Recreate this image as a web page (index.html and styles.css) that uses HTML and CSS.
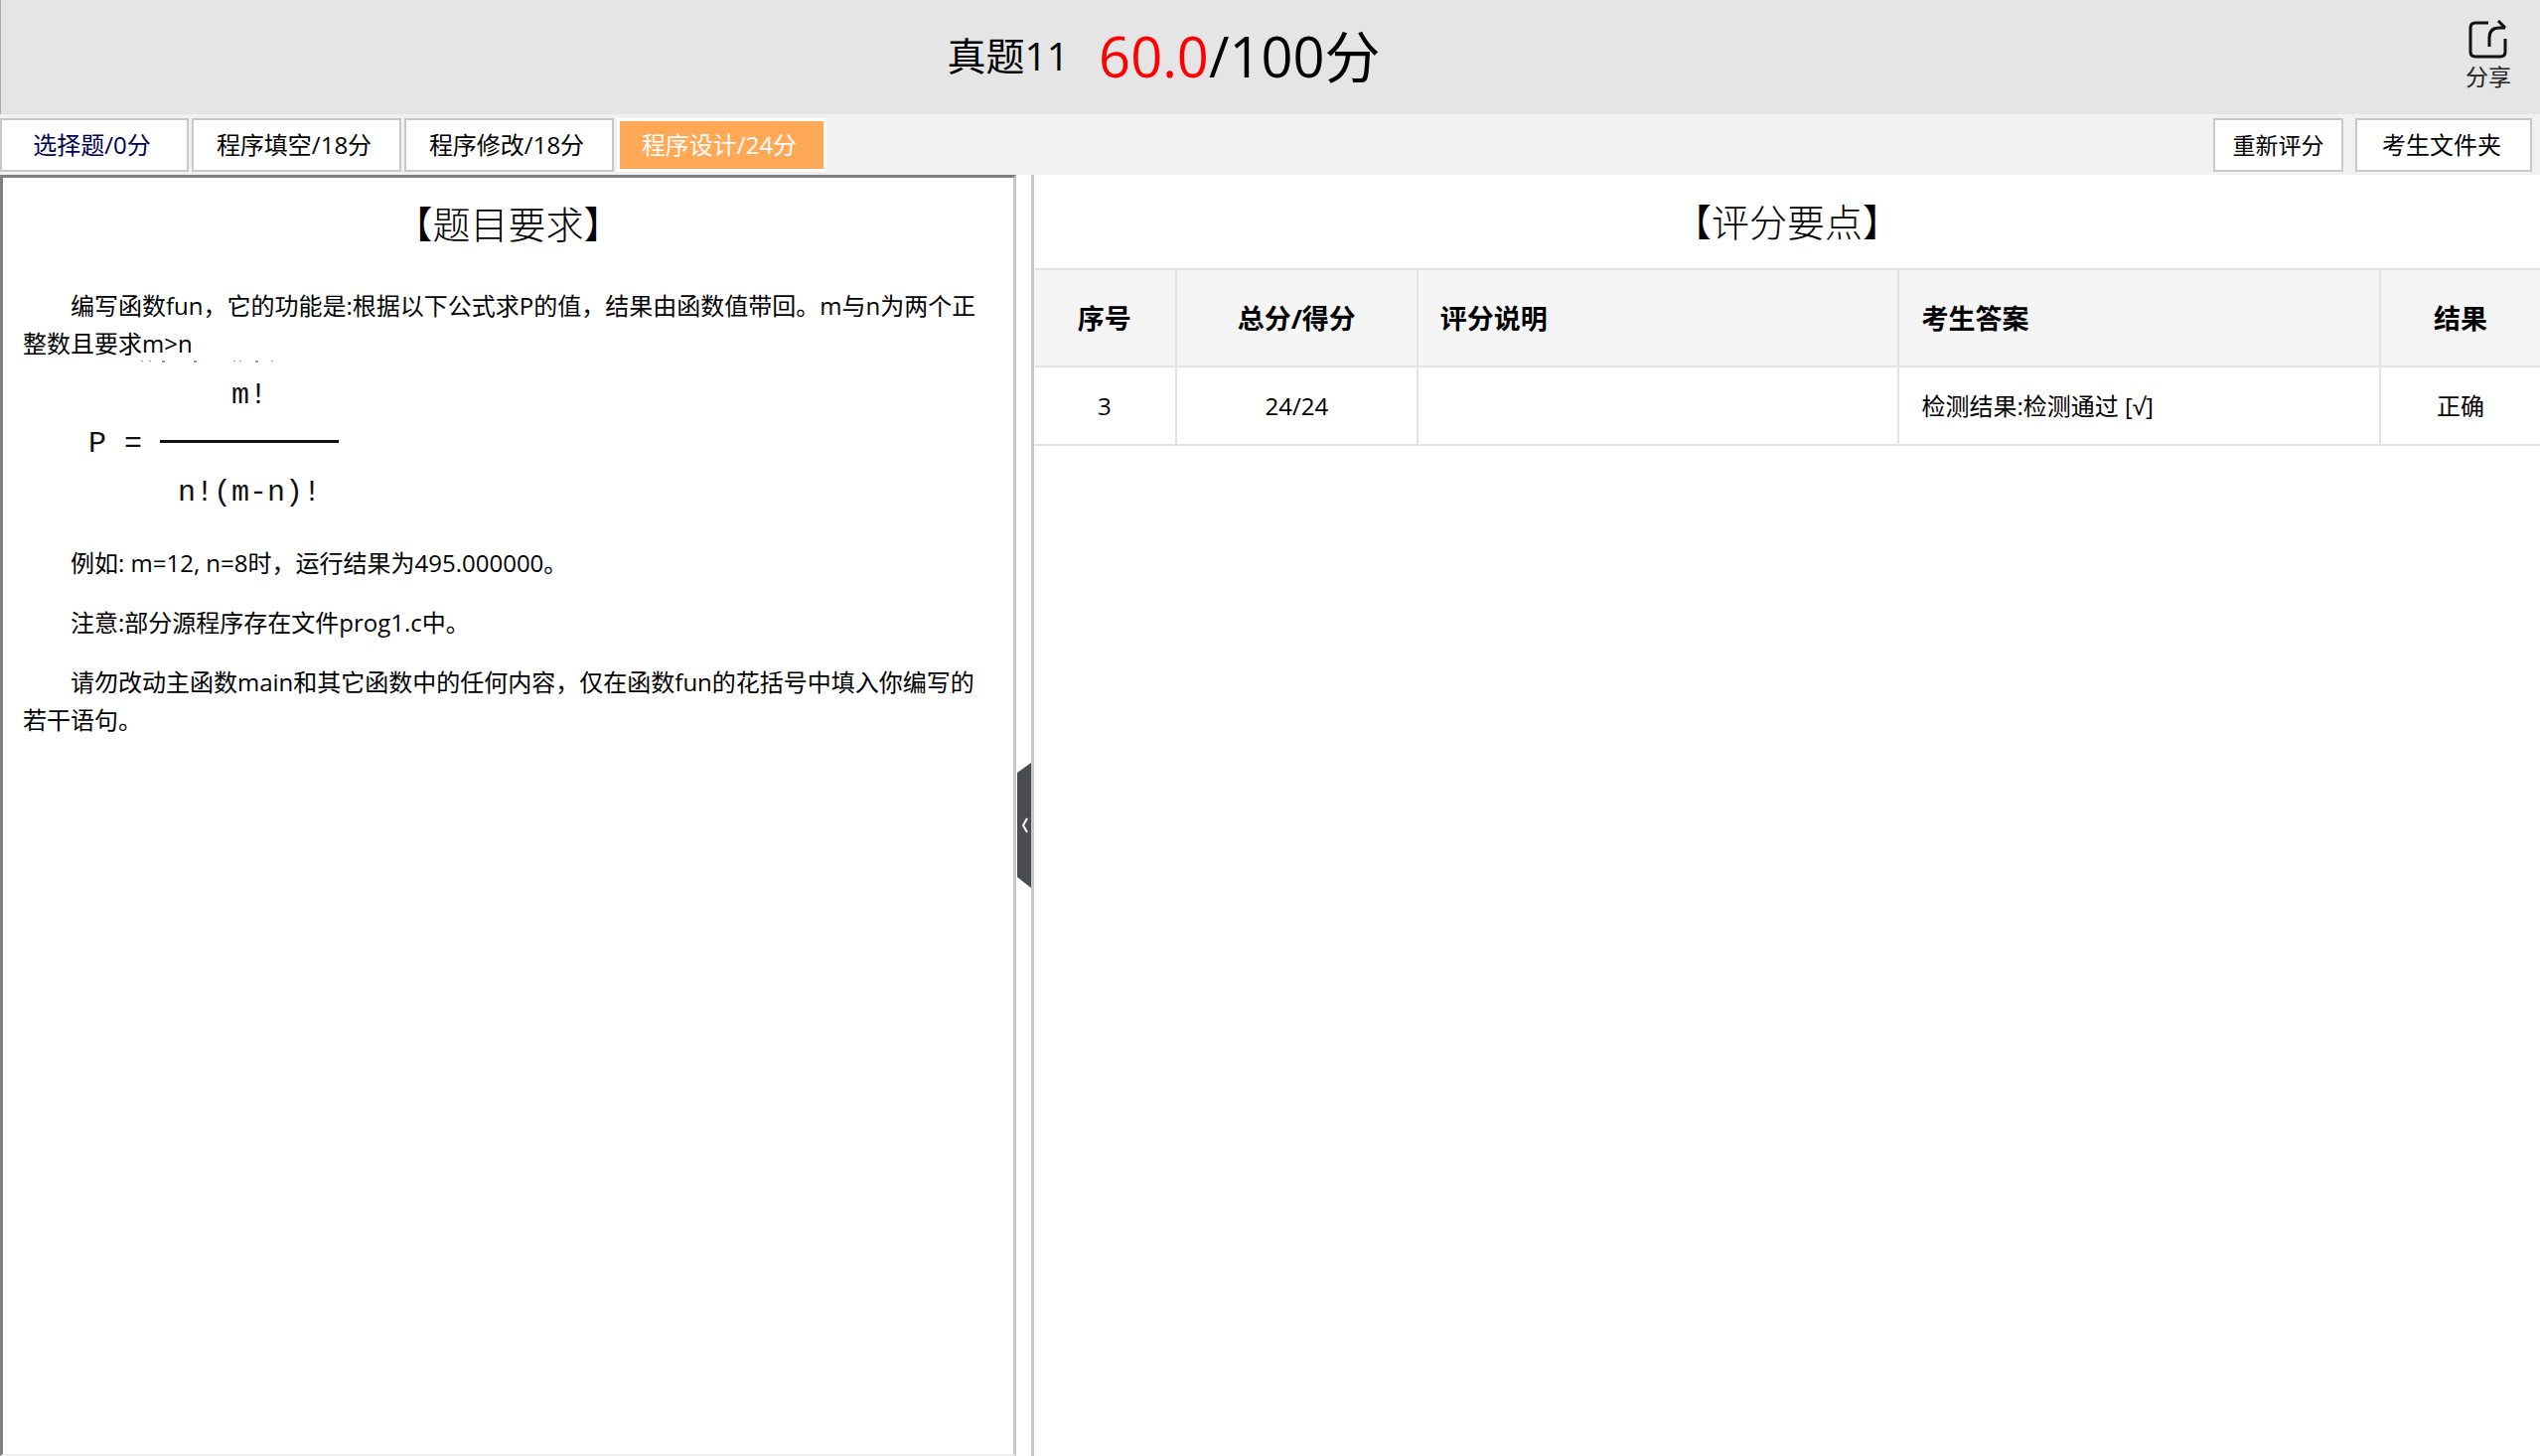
FILE: index.html
```html
<!DOCTYPE html>
<html lang="zh-CN">
<head>
<meta charset="utf-8">
<title>真题11</title>
<link rel="stylesheet" href="styles.css">
</head>
<body>
<div class="app">
  <header class="header">
    <div class="summary">
      <h1 class="paper">真题11</h1>
      <p class="score"><span class="score-got">60.0</span>/100分</p>
    </div>
    <div class="header-side">
      <button class="share" type="button">
        <svg class="share-icon" viewBox="0 0 40 40" aria-hidden="true">
          <path d="M20 3H7Q2 3 2 8V32Q2 37 7 37H32Q37 37 37 32V19"/>
          <path d="M21 27V18Q21 8 31 8H37M30 1L37 8"/>
        </svg>
        <span>分享</span>
      </button>
    </div>
  </header>

  <nav class="toolbar">
    <div class="tabs">
      <button class="tab tab-first" type="button">选择题/0分</button>
      <button class="tab" type="button">程序填空/18分</button>
      <button class="tab" type="button">程序修改/18分</button>
      <button class="tab tab-active" type="button">程序设计/24分</button>
    </div>
    <div class="actions">
      <button class="action action-rescore" type="button">重新评分</button>
      <button class="action action-folder" type="button">考生文件夹</button>
    </div>
  </nav>

  <main class="panes">
    <section class="question">
      <h2 class="pane-title">【题目要求】</h2>
      <div class="question-body">
        <p>编写函数fun，它的功能是:根据以下公式求P的值，结果由函数值带回。m与n为两个正整数且要求m&gt;n</p>
        <div class="formula">
          <svg class="formula-trace" viewBox="0 0 140 3" aria-hidden="true">
            <path d="M1 0h2v1h-2zM9 0h2v1h-2zM22 0h3v2h-3zM54 0h3v2h-3zM94 0h2v1h-2zM100 0h2v1h-2zM116 0h3v2h-3zM132 0h2v1h-2z"/>
          </svg>
          <span>P =</span>
          <span class="fraction">
            <span>m!</span>
            <span class="fraction-bar"></span>
            <span>n!(m-n)!</span>
          </span>
        </div>
        <p>例如: m=12, n=8时，运行结果为495.000000。</p>
        <p>注意:部分源程序存在文件prog1.c中。</p>
        <p>请勿改动主函数main和其它函数中的任何内容，仅在函数fun的花括号中填入你编写的若干语句。</p>
      </div>
    </section>

    <div class="splitter">
      <button class="collapse" type="button" aria-label="收起">
        <svg class="collapse-icon" viewBox="0 0 14 126" aria-hidden="true">
          <path class="collapse-shape" d="M0 10L14 0V126L0 115Z"/>
          <path class="collapse-arrow" d="M10 56L6 63L10 70"/>
        </svg>
      </button>
    </div>

    <section class="grading">
      <h2 class="pane-title">【评分要点】</h2>
      <table class="points">
        <colgroup>
          <col class="col-index"><col class="col-score"><col class="col-note"><col class="col-answer"><col class="col-result">
        </colgroup>
        <thead>
          <tr><th>序号</th><th>总分/得分</th><th class="left">评分说明</th><th class="left">考生答案</th><th>结果</th></tr>
        </thead>
        <tbody>
          <tr><td>3</td><td>24/24</td><td class="left"></td><td class="left">检测结果:检测通过 [√]</td><td>正确</td></tr>
        </tbody>
      </table>
    </section>
  </main>
</div>
</body>
</html>
```

FILE: styles.css
```css
* {
  box-sizing: border-box;
}

body {
  margin: 0;
  background: #fff;
  color: #000;
  font-family: "Open Sans", "Noto Sans CJK SC", sans-serif;
  font-size: 24px;
  line-height: 38px;
}

button {
  margin: 0;
  padding: 0;
  border: 0;
  background: none;
  color: inherit;
  font: inherit;
  cursor: pointer;
}

h1, h2, p {
  margin: 0;
  font-weight: 400;
}

.app {
  display: flex;
  flex-direction: column;
  min-height: 100vh;
}

/* Header */

.header {
  display: flex;
  height: 115px;
  border-left: 1px solid #aaa;
  background: #e5e5e5;
}

.summary {
  display: flex;
  flex: 1;
  align-items: center;
  justify-content: center;
  gap: 30px;
  padding-bottom: 4px;
}

.paper {
  font-size: 39px;
  line-height: 56px;
}

.score {
  font-size: 56px;
  line-height: 72px;
}

.score-got {
  color: #f00;
}

.header-side {
  display: flex;
  justify-content: flex-end;
  align-items: flex-start;
  width: 215px;
  padding: 20px 29px 0 0;
}

.share {
  display: flex;
  flex-direction: column;
  align-items: center;
  color: #222;
  font-size: 23px;
  line-height: 34px;
}

.share-icon {
  width: 40px;
  height: 40px;
  fill: none;
  stroke: #111;
  stroke-width: 3;
  stroke-linejoin: round;
}

/* Toolbar */

.toolbar {
  display: flex;
  align-items: center;
  justify-content: space-between;
  height: 61px;
  padding-right: 8px;
  background: #f1f1f1;
}

.tabs {
  display: flex;
  gap: 3px;
}

.tab,
.action {
  height: 54px;
  border: 2px solid #c8c8c8;
  background: #fff;
}

.tab {
  min-width: 211px;
  padding-right: 5px;
}

.tab-first {
  min-width: 190px;
  color: #000050;
}

.tab-active {
  border: 3px solid #fff;
  background: #ffa957;
  color: #fff;
}

.actions {
  display: flex;
  gap: 12px;
}

.action-rescore {
  min-width: 131px;
  font-size: 23px;
}

.action-folder {
  min-width: 178px;
  padding-right: 4px;
}

/* Panes */

.panes {
  display: flex;
  flex: 1;
}

.pane-title {
  font-size: 38px;
  font-weight: 300;
  line-height: 92px;
  text-align: center;
}

.question {
  flex: 0 0 40%;
  border: 3px solid #808080;
  border-right-color: #c8c8c8;
  border-bottom: 2px solid #f0f0f0;
}

.question-body {
  display: flex;
  flex-direction: column;
  gap: 22px;
  padding: 18px 20px;
}

.question-body p {
  text-indent: 2em;
}

.formula {
  display: flex;
  position: relative;
  align-items: center;
  gap: 18px;
  margin: -22px 0;
  padding: 9px 0 28px 66px;
  color: #111;
  font-family: "Liberation Mono", monospace;
  font-size: 30px;
  line-height: 48px;
}

.formula-trace {
  position: absolute;
  top: -2px;
  left: 118px;
  width: 140px;
  height: 3px;
  fill: #999;
}

.fraction {
  display: flex;
  flex-direction: column;
  align-items: center;
  width: 180px;
}

.fraction-bar {
  width: 100%;
  height: 3px;
  margin: 21px 0 26px;
  background: #111;
}

.splitter {
  display: flex;
  align-items: center;
  justify-content: flex-end;
  width: 15px;
  padding-top: 20px;
}

.collapse {
  display: flex;
}

.collapse-icon {
  width: 14px;
  height: 126px;
}

.collapse-shape {
  fill: #4b4c50;
}

.collapse-arrow {
  fill: none;
  stroke: #fff;
  stroke-width: 2;
}

.grading {
  flex: 1;
  border-left: 3px solid #c8c8c8;
}

/* Grading table */

.grading .pane-title {
  line-height: 94px;
}

.points {
  width: 100%;
  border-collapse: collapse;
  table-layout: fixed;
}

.col-index {
  width: 143px;
}

.col-score {
  width: 243px;
}

.col-result {
  width: 161px;
}

.points th,
.points td {
  padding: 0 22px;
  border: 2px solid #e3e3e3;
  text-align: center;
}

.points tr > :first-child {
  border-left: 0;
}

.points tr > :last-child {
  border-right: 0;
}

.points th {
  height: 98px;
  padding-top: 2px;
  background: #f5f5f5;
  font-size: 27px;
  font-weight: 700;
}

.points td {
  height: 79px;
}

.points .left {
  text-align: left;
}
```
